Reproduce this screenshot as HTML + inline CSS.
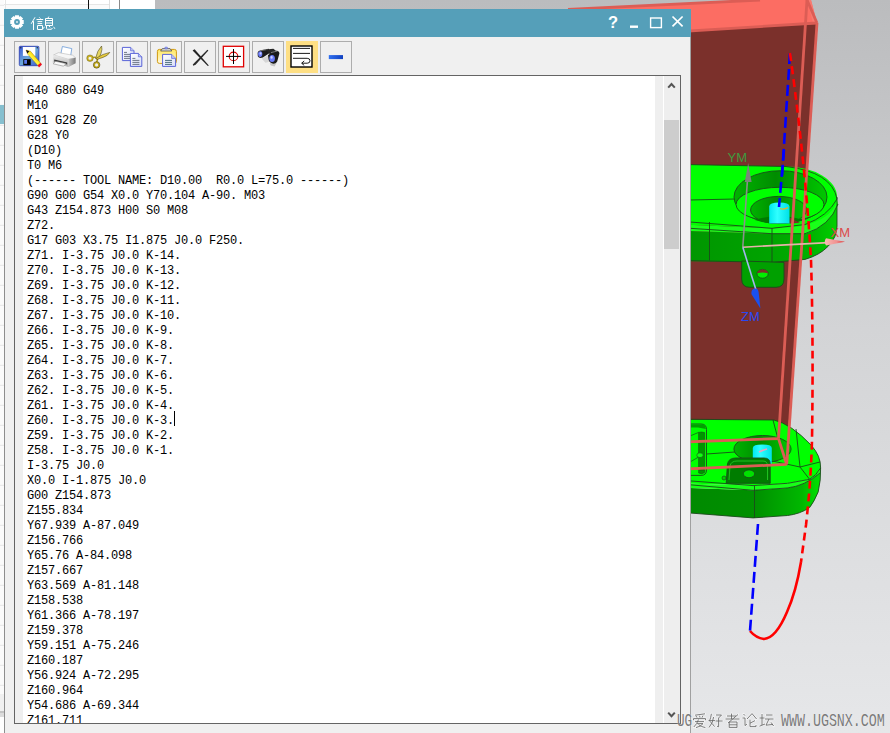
<!DOCTYPE html>
<html><head><meta charset="utf-8">
<style>
html,body{margin:0;padding:0;}
body{width:890px;height:733px;overflow:hidden;position:relative;background:linear-gradient(180deg,#bbbcbe 0%,#d3d4d6 45%,#e6e7e9 100%);font-family:"Liberation Sans",sans-serif;}
#scene{position:absolute;left:0;top:0;}
#topstrip{position:absolute;left:0;top:0;width:155px;height:9px;background:#fff;}
#leftstrip{position:absolute;left:0;top:0;width:4px;height:733px;background:repeating-linear-gradient(180deg,#e6e6e6 0,#e6e6e6 1px,#fbfbfb 1px,#fbfbfb 20px);background-position:0 4.8px;}
.win{position:absolute;left:4px;top:9px;width:687px;height:724px;background:#f0f0f0;}
.title{position:absolute;left:0;top:0;width:687px;height:28px;background:#559fb9;}
.btn{position:absolute;top:32px;width:30px;height:30px;border:1px solid #adadad;background:#f0f0f0;}
.btn.sel{background:#fedf84;border-color:#fedf84;}
.txt{position:absolute;left:10px;top:66px;width:665px;height:647px;border:1px solid #646464;background:#fff;overflow:hidden;}
.gut{position:absolute;left:0;top:0;width:8px;height:647px;background:#efefef;}
pre{position:absolute;left:12px;top:8px;margin:0;font-family:"Liberation Mono",monospace;font-size:12px;letter-spacing:-0.2px;line-height:15px;color:#000;}
.sb{position:absolute;right:0;top:0;width:16px;height:647px;background:#eeeeee;}
.sbgut{position:absolute;right:16px;top:0;width:8px;height:647px;background:#efefef;border-right:1px solid #fff;}
.thumb{position:absolute;left:0;top:44px;width:15px;height:129px;background:#cdcdcd;}
</style></head><body>
<svg id="scene" width="890" height="733" viewBox="0 0 890 733">
<defs>
<linearGradient id="gside" gradientUnits="userSpaceOnUse" x1="690" x2="840" y1="0" y2="0">
<stop offset="0" stop-color="#009600"/><stop offset="0.55" stop-color="#00a400"/><stop offset="0.8" stop-color="#00b000"/><stop offset="1" stop-color="#00d400"/></linearGradient>
<linearGradient id="gside2" gradientUnits="userSpaceOnUse" x1="690" x2="822" y1="0" y2="0">
<stop offset="0" stop-color="#008a00"/><stop offset="0.5" stop-color="#009000"/><stop offset="0.85" stop-color="#00b800"/><stop offset="1" stop-color="#00e800"/></linearGradient>
<linearGradient id="gbore" x1="0" x2="1" y1="0" y2="0">
<stop offset="0" stop-color="#00b400"/><stop offset="0.45" stop-color="#008c00"/><stop offset="1" stop-color="#00c800"/></linearGradient>
<linearGradient id="gpin" x1="0" x2="1" y1="0" y2="0">
<stop offset="0" stop-color="#00e8f0"/><stop offset="0.4" stop-color="#30ffff"/><stop offset="1" stop-color="#00e0e8"/></linearGradient>
<linearGradient id="xcone" gradientUnits="userSpaceOnUse" x1="824" x2="845" y1="0" y2="0"><stop offset="0" stop-color="#f8c0b8"/><stop offset="0.6" stop-color="#f09090"/><stop offset="1" stop-color="#e03030"/></linearGradient>
</defs>
<!-- box top face -->
<polygon points="560,9.4 568,9.4 755,0 811,0 817,23 690,31 560,39" fill="#fc6d63"/>
<polygon points="807,0 811,0 817,23 813,23" fill="#f87a70"/>
<!-- brown front face -->
<polygon points="560,39 690,31 817,23 786,462 560,470" fill="#7b302b"/>
<!-- ===== upper bracket ===== -->
<path d="M600,228 L772,233.7 L805,233.7 Q830,226 837,197 L837,226 A51,36 0 0 1 805,259.4 L772,262.4 L600,260 Z" fill="url(#gside)"/>
<path d="M600,221 L772,228.3 L805,224.5 Q828,216 837,200 L838,204 Q830,226 805,233.7 L772,233.7 L600,228 Z" fill="#1aff1a"/>
<polygon points="600,163 786,166.5 786,226 772,228.3 600,221" fill="#00ff00"/>
<ellipse cx="786" cy="197" rx="51" ry="30.5" fill="#00ff00"/>
<g fill="none" stroke="#1b4a1b" stroke-width="0.9">
<path d="M690,164.6 L786,166.5"/>
<path d="M690,200 L735,199"/>
<path d="M690,222 L772,228.3 L805,224.5 Q828,216 837,199"/>
<path d="M690,228.3 L772,233.7 L805,233.7 Q830,226 838,204"/>
<path d="M690,260.6 L772,262.4 L805,259.4 A51,36 0 0 0 837,226 L837,197"/>
<path d="M786,166.5 Q832,172 837,199"/>
<path d="M709.5,222 V260.5 M772,228.3 V262.4"/>
</g>
<ellipse cx="780.5" cy="197" rx="46.5" ry="26.3" fill="url(#gbore)" stroke="#1b4a1b" stroke-width="0.9"/>
<ellipse cx="780" cy="204.5" rx="44" ry="17.2" fill="#00ff00" stroke="#1b4a1b" stroke-width="0.9"/>
<ellipse cx="778.6" cy="210" rx="28" ry="13.6" fill="url(#gbore)" stroke="#1b4a1b" stroke-width="0.9"/>
<path d="M755,220 Q778,212 803,220 Q790,224 778,223.6 Q765,223.6 755,220Z" fill="#007a00"/>
<path d="M789.5,217.5 L800,223 L789.5,223.5Z" fill="#7b302b"/>
<path d="M769.2,206.5 Q769.2,202.6 779.3,202.6 Q789.5,202.6 789.5,206.5 L789.5,223.6 L769.2,223.6 Z" fill="url(#gpin)"/>
<path d="M780,208.5 Q784,210 788,207.5" stroke="#f0b020" stroke-width="1.3" fill="none"/>
<!-- tab -->
<path d="M741.7,261 L784,262.4 L784,279 Q784,287.3 776,287.3 L749.7,287.3 Q741.7,287.3 741.7,279 Z" fill="#00a000" stroke="#1b4a1b" stroke-width="0.9"/>
<ellipse cx="762.6" cy="273.8" rx="5.6" ry="4.4" fill="#00f000" stroke="#1b4a1b" stroke-width="0.8"/>
<path d="M757.2,273.2 Q757.5,269.6 762.6,269.5 Q767.7,269.6 768,273.2 Q762.6,271.6 757.2,273.2Z" fill="#7b302b"/>
<!-- ===== lower bracket ===== -->
<path d="M600,484.8 L753,490.3 L787,488 Q805,486 820,473 L820.6,468 Q821,480 818.2,491.9 Q814,502 809.6,507.6 Q800,514 787.5,515.5 L753,517.9 L690,513 L600,512 Z" fill="url(#gside2)"/>
<path d="M600,419.3 L774,420 Q791,424 811,445 Q821,456 820.6,468 Q816,476 809.6,479.3 L787.5,483.3 L753,485.6 L600,480.9 Z" fill="#00ff00"/>
<path d="M600,480.9 L753,485.6 L787.5,483.3 L809.6,479.3 Q816,476 820.6,468 L820,473 Q805,486 787,488 L753,490.3 L600,484.8 Z" fill="#18ff18"/>
<g fill="none" stroke="#1b4a1b" stroke-width="0.9">
<path d="M690,419.3 L774,420 Q791,424 811,445 Q821,456 820.6,468 Q821,480 818.2,491.9 Q814,502 809.6,507.6 Q800,514 787.5,515.5 L753,517.9 L690,513"/>
<path d="M690,480.9 L753,485.6 L787.5,483.3 L809.6,479.3 Q816,476 820.6,468"/>
<path d="M690,484.8 L753,490.3 L787,488 Q805,486 820,473"/>
<path d="M754.5,486 V518"/>
<path d="M773,420 L778,439 M796,429 L800,467 L809.6,479.3 M768,460 L800,467 L820,462"/>
<path d="M706.5,454 L735,452"/>
</g>
<ellipse cx="762.5" cy="449" rx="28.6" ry="13.5" fill="url(#gbore)" stroke="#1b4a1b" stroke-width="0.9"/>
<path d="M752.8,448 Q752.8,444.6 762.3,444.6 Q771.8,444.6 771.8,448 L771.8,464.4 L752.8,464.4 Z" fill="url(#gpin)"/>
<path d="M759,452 Q763,450 767,449" stroke="#f0a0c0" stroke-width="1.5" fill="none"/>
<path d="M726.2,483.3 L727.5,464 Q728.5,458 736,458 L764,458 Q770.2,458 770.2,464 L770.2,483.3 Z" fill="#007c00" stroke="#1b4a1b" stroke-width="0.9"/>
<path d="M729,480 L730,466 Q731,461 737,461 L763,461 Q767.5,461 767.5,466 L767.5,480" fill="none" stroke="#20c020" stroke-width="1"/>
<ellipse cx="749" cy="473.8" rx="5.6" ry="3.9" fill="#00e000" stroke="#1b4a1b" stroke-width="0.8"/>
<circle cx="724" cy="478" r="2" fill="#00d000" stroke="#1b4a1b" stroke-width="0.7"/>
<path d="M683,424 H701 Q706.5,424 706.5,429.5 V470 Q706.5,475.4 701,475.4 H683 Z" fill="#00ff00" stroke="#1b4a1b" stroke-width="0.9"/>
<path d="M683,424.6 H701 Q705.8,424.6 705.8,429 L698,427.6 H683 Z" fill="#00a000"/>
<path d="M698.6,432.4 Q702,431.6 704.6,432.6 V472.6 Q702,474.6 698.6,473 Z" fill="#009600" stroke="#1b4a1b" stroke-width="0.6"/>
<path d="M690,436 L698.6,432.4 M690,462 L698.6,457 M699,470 L704.6,470" stroke="#1b4a1b" stroke-width="0.7" fill="none"/>
<ellipse cx="700" cy="455.2" rx="3.2" ry="2.4" fill="#10ff10" stroke="#1b4a1b" stroke-width="0.6"/>
<!-- box edges -->
<g stroke="#dc5d55" stroke-width="2.8" fill="none">
<line x1="807" y1="0" x2="778.5" y2="438.6"/>
<line x1="817" y1="23" x2="786.7" y2="464.4"/>
<line x1="807" y1="0" x2="817" y2="23"/>
<line x1="560" y1="39" x2="817" y2="23"/>
<line x1="568" y1="9.4" x2="760" y2="0"/>
<line x1="600" y1="445" x2="778.5" y2="438.6"/>
<line x1="600" y1="473" x2="786.7" y2="464.4"/>
<line x1="778.5" y1="438.6" x2="786.7" y2="464.4"/>
</g>
<!-- tool path -->
<g fill="none" stroke-width="2.6">
<path d="M790,53 L782,176" stroke="#0000ff" stroke-dasharray="11,5"/>
<path d="M784,150 L779,207" stroke="#0000ff" stroke-dasharray="11,5"/>
<path d="M790,53 Q806,170 811,260 Q813.5,340 812,440 Q811,480 806,525 L801,562" stroke="#ff0000" stroke-dasharray="8,5"/>
<path d="M758,524 L750,631" stroke="#0000ff" stroke-dasharray="11,5"/>
<path d="M801,562 Q796,592 787,612 Q776,638 764,639 Q756,638 750,631" stroke="#ff0000"/>
</g>
<!-- axes -->
<line x1="742.8" y1="247.2" x2="747.6" y2="178" stroke="#8a918a" stroke-width="1.6"/>
<polygon points="748.2,163 751.6,182 744.8,182" fill="#7a857a"/>
<line x1="742.8" y1="247.2" x2="828" y2="242.6" stroke="#e6b2aa" stroke-width="1.6"/>
<path d="M845,241.7 L826,238.2 Q823.6,241.9 826,245.6 Z" fill="url(#xcone)"/>
<line x1="742.8" y1="247.2" x2="756" y2="290" stroke="#a4b4f0" stroke-width="1.6"/>
<path d="M760.4,308.4 L751.4,294 Q751,289.5 754.5,288.6 Q758,288 758.6,292 Z" fill="#1a50f0"/>
<text x="727.5" y="162.3" font-family="Liberation Sans" font-size="13" fill="#3f9a3f">YM</text>
<text x="830.5" y="237" font-family="Liberation Sans" font-size="13" fill="#dc4a4a">XM</text>
<text x="741" y="320.7" font-family="Liberation Sans" font-size="13" fill="#2a48f2">ZM</text>
</svg>
<div id="topstrip">
<div style="position:absolute;left:0;top:4px;width:109px;height:1px;background:#e6e6e6"></div>
<div style="position:absolute;left:0;top:5px;width:109px;height:4px;background:#fafafa"></div>
<div style="position:absolute;left:5px;top:0;width:1px;height:9px;background:#e4e4e4"></div>
<div style="position:absolute;left:88px;top:0;width:1px;height:9px;background:#111"></div>
<div style="position:absolute;left:109px;top:0;width:1px;height:9px;background:#dedede"></div>
<div style="position:absolute;left:119px;top:0;width:1px;height:9px;background:#8a8a8a"></div>
</div>
<div id="leftstrip">
<div style="position:absolute;left:0;top:105px;width:4px;height:19px;background:#86bfcf"></div>
<div style="position:absolute;left:0;top:694px;width:4px;height:17px;background:#f0f0f0"></div>
<div style="position:absolute;left:0;top:711px;width:4px;height:2px;background:#c4c4c4"></div>
<div style="position:absolute;left:0;top:713px;width:4px;height:4px;background:#dcdcdc"></div>
<div style="position:absolute;left:0;top:717px;width:4px;height:16px;background:#fff"></div>
</div>
<div class="win">
  <div class="title"></div>
  <div style="position:absolute;left:0;top:28px;width:1px;height:700px;background:#8e8e8e"></div>
  <div style="position:absolute;left:686px;top:28px;width:1px;height:700px;background:#a0a0a0"></div>
  <div class="btn" style="left:10px"></div>
  <div class="btn" style="left:44px"></div>
  <div class="btn" style="left:78px"></div>
  <div class="btn" style="left:112px"></div>
  <div class="btn" style="left:146px"></div>
  <div class="btn" style="left:180px"></div>
  <div class="btn" style="left:214px"></div>
  <div class="btn" style="left:248px"></div>
  <div class="btn sel" style="left:282px"></div>
  <div class="btn" style="left:316px"></div>
  <div class="txt">
    <div class="gut"></div>
<pre>G40 G80 G49
M10
G91 G28 Z0
G28 Y0
(D10)
T0 M6
(------ TOOL NAME: D10.00  R0.0 L=75.0 ------)
G90 G00 G54 X0.0 Y70.104 A-90. M03
G43 Z154.873 H00 S0 M08
Z72.
G17 G03 X3.75 I1.875 J0.0 F250.
Z71. I-3.75 J0.0 K-14.
Z70. I-3.75 J0.0 K-13.
Z69. I-3.75 J0.0 K-12.
Z68. I-3.75 J0.0 K-11.
Z67. I-3.75 J0.0 K-10.
Z66. I-3.75 J0.0 K-9.
Z65. I-3.75 J0.0 K-8.
Z64. I-3.75 J0.0 K-7.
Z63. I-3.75 J0.0 K-6.
Z62. I-3.75 J0.0 K-5.
Z61. I-3.75 J0.0 K-4.
Z60. I-3.75 J0.0 K-3.
Z59. I-3.75 J0.0 K-2.
Z58. I-3.75 J0.0 K-1.
I-3.75 J0.0
X0.0 I-1.875 J0.0
G00 Z154.873
Z155.834
Y67.939 A-87.049
Z156.766
Y65.76 A-84.098
Z157.667
Y63.569 A-81.148
Z158.538
Y61.366 A-78.197
Z159.378
Y59.151 A-75.246
Z160.187
Y56.924 A-72.295
Z160.964
Y54.686 A-69.344
Z161.711</pre>
    <div style="position:absolute;left:159px;top:335px;width:1px;height:15px;background:#000"></div>
    <div class="sbgut"></div>
    <div class="sb"><div class="thumb"></div><svg width="16" height="647" style="position:absolute;left:0;top:0"><path d="M4.2,11.6 L7.5,8.1 L10.8,11.6" stroke="#555" stroke-width="2.1" fill="none"/><path d="M4.2,636.6 L7.5,640.1 L10.8,636.6" stroke="#555" stroke-width="2.1" fill="none"/></svg></div>
  </div>
</div>
<svg id="chrome" width="700" height="80" viewBox="0 0 700 80" style="position:absolute;left:0;top:0">
<defs>
<linearGradient id="flop" x1="0" x2="1" y1="0" y2="1"><stop offset="0" stop-color="#3a5ad8"/><stop offset="0.5" stop-color="#6aa8d8"/><stop offset="1" stop-color="#3a5ad0"/></linearGradient>
<linearGradient id="pen" x1="0" x2="1" y1="1" y2="0"><stop offset="0" stop-color="#ffd000"/><stop offset="0.4" stop-color="#ffff50"/><stop offset="0.65" stop-color="#ffd000"/><stop offset="1" stop-color="#e08800"/></linearGradient>
<linearGradient id="prn" x1="0" x2="0" y1="0" y2="1"><stop offset="0" stop-color="#ececec"/><stop offset="1" stop-color="#b0b0b0"/></linearGradient><linearGradient id="prnr" x1="0" x2="1" y1="0" y2="0"><stop offset="0" stop-color="#c8c8c8"/><stop offset="1" stop-color="#7a7a7a"/></linearGradient>
<linearGradient id="gold" x1="0" x2="1" y1="0" y2="1"><stop offset="0" stop-color="#f0e080"/><stop offset="0.5" stop-color="#b89a20"/><stop offset="1" stop-color="#6a5a10"/></linearGradient>
<linearGradient id="clip" x1="0" x2="0" y1="0" y2="1"><stop offset="0" stop-color="#ffe860"/><stop offset="1" stop-color="#fff8e0"/></linearGradient>
<linearGradient id="docg" x1="0" x2="1" y1="0" y2="1"><stop offset="0" stop-color="#ffffff"/><stop offset="1" stop-color="#d8def8"/></linearGradient>
<linearGradient id="minus" x1="0" x2="1" y1="0" y2="0"><stop offset="0" stop-color="#3070f0"/><stop offset="1" stop-color="#1040c0"/></linearGradient>
</defs>
<!-- title -->
<g fill="#fff">
<path fill-rule="evenodd" d="M14.89,17.14 L15.07,15.27 L18.93,15.27 L19.11,17.14 L18.94,17.07 L20.39,15.88 L23.12,18.61 L21.93,20.06 L21.86,19.89 L23.73,20.07 L23.73,23.93 L21.86,24.11 L21.93,23.94 L23.12,25.39 L20.39,28.12 L18.94,26.93 L19.11,26.86 L18.93,28.73 L15.07,28.73 L14.89,26.86 L15.06,26.93 L13.61,28.12 L10.88,25.39 L12.07,23.94 L12.14,24.11 L10.27,23.93 L10.27,20.07 L12.14,19.89 L12.07,20.06 L10.88,18.61 L13.61,15.88 L15.06,17.07Z M19.9,22 A2.9,2.9 0 1 0 14.1,22 A2.9,2.9 0 1 0 19.9,22Z M16.2,21.2h1.6v1.6h-1.6z"/>
</g>
<g stroke="#fff" stroke-width="1" fill="none" stroke-linecap="butt">
<path d="M35,17.3 L31.2,23.8"/><path d="M33.5,21.2 V30"/>
<path d="M39.3,17.4 L40.5,18.6"/><path d="M36.5,19.5 H43.2"/><path d="M37.5,21.6 H42.2"/><path d="M37.5,23.6 H42.2"/>
<path d="M37.5,25.5 H42.5 V29.5 H37.5 Z"/>
<path d="M48.8,16.6 L47.9,18.2"/><path d="M45.5,18.5 H52.5 V25.5 H45.5 Z"/><path d="M45.5,20.5 H52.5"/><path d="M45.5,23 H52.5"/>
<path d="M44.3,26.8 L43.5,28.6"/><path d="M46.5,26 V28.5 Q46.5,29.3 47.5,29.3 H51.3 Q52,29.3 52.2,28"/><path d="M49,26 L50.2,27.4"/><path d="M53.6,26.8 L54.9,28.8"/>
</g>
<!-- title controls -->
<text x="608" y="28.2" font-family="Liberation Sans" font-weight="bold" font-size="16.5" fill="#fff">?</text>
<rect x="630" y="25.5" width="8" height="2.4" fill="#fff"/>
<rect x="650.6" y="18" width="10.8" height="9.6" fill="none" stroke="#fff" stroke-width="1.4"/>
<path d="M672.5,16.5 L682.6,26.3 M682.6,16.5 L672.5,26.3" stroke="#fff" stroke-width="1.7"/>
<!-- 1 floppy -->
<rect x="19.3" y="46.3" width="19.6" height="19.4" rx="1" fill="url(#flop)" stroke="#2a3ab0" stroke-width="0.8"/>
<rect x="22.9" y="47" width="12.4" height="8.9" fill="#fff"/>
<rect x="23.3" y="59.2" width="7.4" height="6" fill="#000"/>
<rect x="24.2" y="60" width="2.8" height="3.8" fill="#5a7af0"/>
<circle cx="20.8" cy="47.8" r="0.7" fill="#223"/><circle cx="37.3" cy="47.8" r="0.7" fill="#223"/>
<path d="M26,50 L30.5,51.3 L41,63.5 L38.2,66 L27.6,54 Z" fill="url(#pen)" stroke="#8a6a00" stroke-width="0.4"/>
<path d="M26,50 L29.4,51.2 L27.4,53.4 Z" fill="#111"/>
<path d="M37.6,65.3 L40.6,62.8 L42,64.6 L39,67.4 Z" fill="#ee1020"/>
<!-- 2 printer -->
<path d="M62.4,46.5 L71.8,48.6 L70.6,56 L60.8,54 Z" fill="#fff" stroke="#6a9ad8" stroke-width="0.8"/>
<path d="M53.6,55 L58.5,52.6 L72.6,55.2 L75.6,57.8 L68.2,59.2 Z" fill="#f6f6f6" stroke="#9a9a9a" stroke-width="0.4"/>
<path d="M68.2,59.2 L75.6,57.8 L75.6,63.2 L68.6,67 Z" fill="url(#prnr)"/>
<path d="M53.6,55 L68.2,59.2 L68.6,67 L52.6,62.6 Z" fill="url(#prn)"/>
<path d="M54.2,59.6 L67.2,62.4 L67.2,64.4 L54.2,61.6 Z" fill="#3a3a3a"/>
<path d="M55.6,61.3 L66,63.6 L63.6,66.2 L53.2,63.8 Z" fill="#fafafa" stroke="#777" stroke-width="0.5"/>
<!-- 3 scissors -->
<path d="M92.2,57.6 Q94.5,56.8 97,57.6 M96.6,62.6 L97.6,59" stroke="#b09a18" stroke-width="1.5" fill="none"/>
<path d="M95.6,58.6 Q97,50.5 101.6,46 Q102.6,49 101,53.5 Q99.8,56.6 97.6,59.6 Z" fill="#e4d460" stroke="#3a3208" stroke-width="0.5"/>
<path d="M96.2,58.2 Q103,53.6 109.8,52.4 Q108,55.8 103,57.4 Q100,58.4 97,59.4 Z" fill="#e8cc40" stroke="#3a3208" stroke-width="0.5"/>
<circle cx="90" cy="58.2" r="2.4" fill="none" stroke="#c8b020" stroke-width="1.7"/>
<circle cx="90" cy="58.2" r="3.3" fill="none" stroke="#5a5010" stroke-width="0.4"/>
<circle cx="96.6" cy="64.9" r="2.4" fill="none" stroke="#c0a818" stroke-width="1.7"/>
<circle cx="96.6" cy="64.9" r="3.3" fill="none" stroke="#3a3208" stroke-width="0.5"/>
<!-- 4 copy -->
<path d="M122.4,47.4 H130.6 L134,50.8 V60.6 H122.4 Z" fill="url(#docg)" stroke="#5a64d8" stroke-width="1"/>
<path d="M130.6,47.4 V50.8 H134" fill="#c0c6f4" stroke="#5a64d8" stroke-width="0.7"/>
<g stroke="#606878" stroke-width="0.9"><path d="M124,52.4h3M124,54.4h6M124,56.4h6M124,58.4h6"/></g>
<path d="M130.4,53.4 H138.4 L141.8,56.8 V66.4 H130.4 Z" fill="url(#docg)" stroke="#5a64d8" stroke-width="1"/>
<path d="M138.4,53.4 V56.8 H141.8" fill="#c0c6f4" stroke="#5a64d8" stroke-width="0.7"/>
<g stroke="#606878" stroke-width="0.9"><path d="M132.4,58.4h3M132.4,60.4h7M132.4,62.4h7M132.4,64.4h7"/></g>
<!-- 5 paste -->
<rect x="157.4" y="49.4" width="19" height="14" rx="2" fill="url(#clip)" stroke="#d09a10" stroke-width="1"/>
<path d="M160.6,51 L162.4,48.6 H170 L171.8,51 Z" fill="#d8d8d8" stroke="#444" stroke-width="0.7"/>
<ellipse cx="166.2" cy="48" rx="1.6" ry="1.1" fill="#8a96ee" stroke="#5a64c8" stroke-width="0.4"/>
<path d="M162.6,54.4 H171.6 L175.6,58.4 V66.4 H162.6 Z" fill="url(#docg)" stroke="#5a64d8" stroke-width="1"/>
<path d="M171.6,54.4 V58.4 H175.6" fill="#c0c6f4" stroke="#5a64d8" stroke-width="0.7"/>
<g stroke="#3a6070" stroke-width="0.9"><path d="M165,60.4h7M165,62.4h7M165,64.4h7"/></g>
<!-- 6 X -->
<path d="M192.6,50.6 L194.6,49.2 L208.8,65.6 L207.8,66 Z" fill="#222"/>
<path d="M207.4,49.8 L208.4,50.4 L195.6,64.8 L193.2,65.8 L192.8,64.4 Z" fill="#2a2a2a"/>
<!-- 7 target -->
<rect x="223.3" y="46.3" width="20.3" height="20.5" fill="#fff" stroke="#e00000" stroke-width="1.3"/>
<circle cx="233.5" cy="56.4" r="4.3" fill="none" stroke="#e00000" stroke-width="1.1"/>
<path d="M226,56.4 H241 M233.5,49 V64" stroke="#000" stroke-width="1"/>
<!-- 8 binoculars -->
<polygon points="261.6,58.6 268,55.6 268.8,62 265.4,62.8" fill="#d6d6d6"/>
<polygon points="269.6,63.2 276.8,62.4 274.6,66.6 270.8,65.6" fill="#c4c4c4"/>
<path d="M257.6,52.8 Q258,50.6 261,50.2 L268.6,48.8 L270.4,52.4 L262.8,57.6 Q259,58.8 257.8,56.2 Z" fill="#1c1c1c"/>
<path d="M260.4,50.8 L268,49.4" stroke="#8a8a8a" stroke-width="0.7"/>
<path d="M266,49.4 L273.4,48.8 L276.4,51.2 L270,54.4 Z" fill="#262626"/>
<path d="M268,55 L275.6,50.8 Q279.2,50.4 279.4,53.4 L277.2,61.6 Q276,64.2 272.6,63.6 Q268.6,62.6 268.4,58.6 Z" fill="#1a1a1a"/>
<path d="M271,52.6 L277.6,51" stroke="#9a9a9a" stroke-width="0.7"/>
<ellipse cx="260.2" cy="54.1" rx="2.1" ry="2.8" fill="#6a7af6"/>
<ellipse cx="260.6" cy="53.4" rx="0.9" ry="1.2" fill="#c8d0ff"/>
<ellipse cx="272.1" cy="58.4" rx="2.8" ry="3.5" fill="#6a7af6"/>
<ellipse cx="271.6" cy="57.4" rx="1.1" ry="1.4" fill="#c8d0ff"/>
<!-- 9 wrap -->
<rect x="291" y="46" width="21" height="21" fill="#fff" stroke="#000" stroke-width="1.4"/>
<path d="M293,48.4 H310 M293,53.4 H310 M293,58.3 H307.2 Q310,58.3 310,60.8 Q310,63.2 307.2,63.2 H302" stroke="#000" stroke-width="0.9" fill="none"/>
<path d="M304.2,61 L301.6,63.2 L304.2,65.4" stroke="#000" stroke-width="0.9" fill="none"/>
<!-- 10 minus -->
<rect x="328.8" y="55.1" width="14.2" height="4" fill="url(#minus)"/>
</svg>
<svg id="wm" width="220" height="30" viewBox="670 703 220 30" style="position:absolute;left:670px;top:703px">
<g fill="none" stroke="#ffffff" stroke-opacity="0.55" stroke-width="2.2" stroke-linecap="round" stroke-linejoin="round">
<path transform="translate(692,713)" d="M13,0.8 L3,2.2 M4,3 L5,4.6 M7.6,2.8 L8,4.6 M11,2.6 L10,4.6 M1.5,7.2 V5.6 H13.5 V7.2 M3,8.6 H12 M6.5,6.5 Q5,11 1.8,14 M5,10.6 H11 Q9,13.5 4,14.6 M6.5,11.6 Q9,13.8 13.4,14.6"/>
<path transform="translate(708,713)" d="M3.4,0.8 Q2.8,5 1.5,8 Q4.5,10.5 6.5,13.6 M5.6,4 Q5,10 1,14.5 M0.5,7.6 H7 M8,2 H13.5 L10.6,5 M10.6,5 V13.8 L9,13.2 M7.6,8 H14.6"/>
<path transform="translate(725,713)" d="M2,3 H11 M6.5,0.6 V6 M0.5,6 H14.5 M13,1.5 L3,10 M4.2,9 V14.6 M4.2,9 H12 V14.6 M4.2,11.8 H12 M4.2,14.4 H12"/>
<path transform="translate(742,713)" d="M1.5,1 L3,2.6 M0.5,5 H3 V12.6 L5,11 M10,0.6 L5,6 M10,0.6 L14.6,6 M8,6.6 V13.6 H14 V12 M13,7.6 L8,10.2"/>
<path transform="translate(759,713)" d="M0.5,5 H5.5 M3,1 V12 M0.5,13.2 L6,11 M7,2 H13.5 M6,6 H14.5 M10,6 L7,12.2 L14,11.4 M12,9.4 L14.6,13"/>
</g>
<g fill="none" stroke="#666" stroke-width="0.85" stroke-linecap="butt">
<path transform="translate(692,713)" d="M13,0.8 L3,2.2 M4,3 L5,4.6 M7.6,2.8 L8,4.6 M11,2.6 L10,4.6 M1.5,7.2 V5.6 H13.5 V7.2 M3,8.6 H12 M6.5,6.5 Q5,11 1.8,14 M5,10.6 H11 Q9,13.5 4,14.6 M6.5,11.6 Q9,13.8 13.4,14.6"/>
<path transform="translate(708,713)" d="M3.4,0.8 Q2.8,5 1.5,8 Q4.5,10.5 6.5,13.6 M5.6,4 Q5,10 1,14.5 M0.5,7.6 H7 M8,2 H13.5 L10.6,5 M10.6,5 V13.8 L9,13.2 M7.6,8 H14.6"/>
<path transform="translate(725,713)" d="M2,3 H11 M6.5,0.6 V6 M0.5,6 H14.5 M13,1.5 L3,10 M4.2,9 V14.6 M4.2,9 H12 V14.6 M4.2,11.8 H12 M4.2,14.4 H12"/>
<path transform="translate(742,713)" d="M1.5,1 L3,2.6 M0.5,5 H3 V12.6 L5,11 M10,0.6 L5,6 M10,0.6 L14.6,6 M8,6.6 V13.6 H14 V12 M13,7.6 L8,10.2"/>
<path transform="translate(759,713)" d="M0.5,5 H5.5 M3,1 V12 M0.5,13.2 L6,11 M7,2 H13.5 M6,6 H14.5 M10,6 L7,12.2 L14,11.4 M12,9.4 L14.6,13"/>
</g>
</svg>
<div id="wmt" style="position:absolute;left:677px;top:708px;height:20px;font-family:'Liberation Mono',monospace;font-size:12.6px;line-height:20px;color:#7a7a7a;white-space:pre;transform:scaleY(1.4);transform-origin:0 0;text-shadow:0 0 1px rgba(255,255,255,0.7)"><span style="letter-spacing:-0.1px">UG</span></div>
<div id="wmt2" style="position:absolute;left:781px;top:708px;height:20px;font-family:'Liberation Mono',monospace;font-size:13.3px;line-height:20px;color:#7a7a7a;white-space:pre;transform:scaleY(1.4);transform-origin:0 0;text-shadow:0 0 1px rgba(255,255,255,0.7)">WWW.UGSNX.COM</div>
</body></html>
